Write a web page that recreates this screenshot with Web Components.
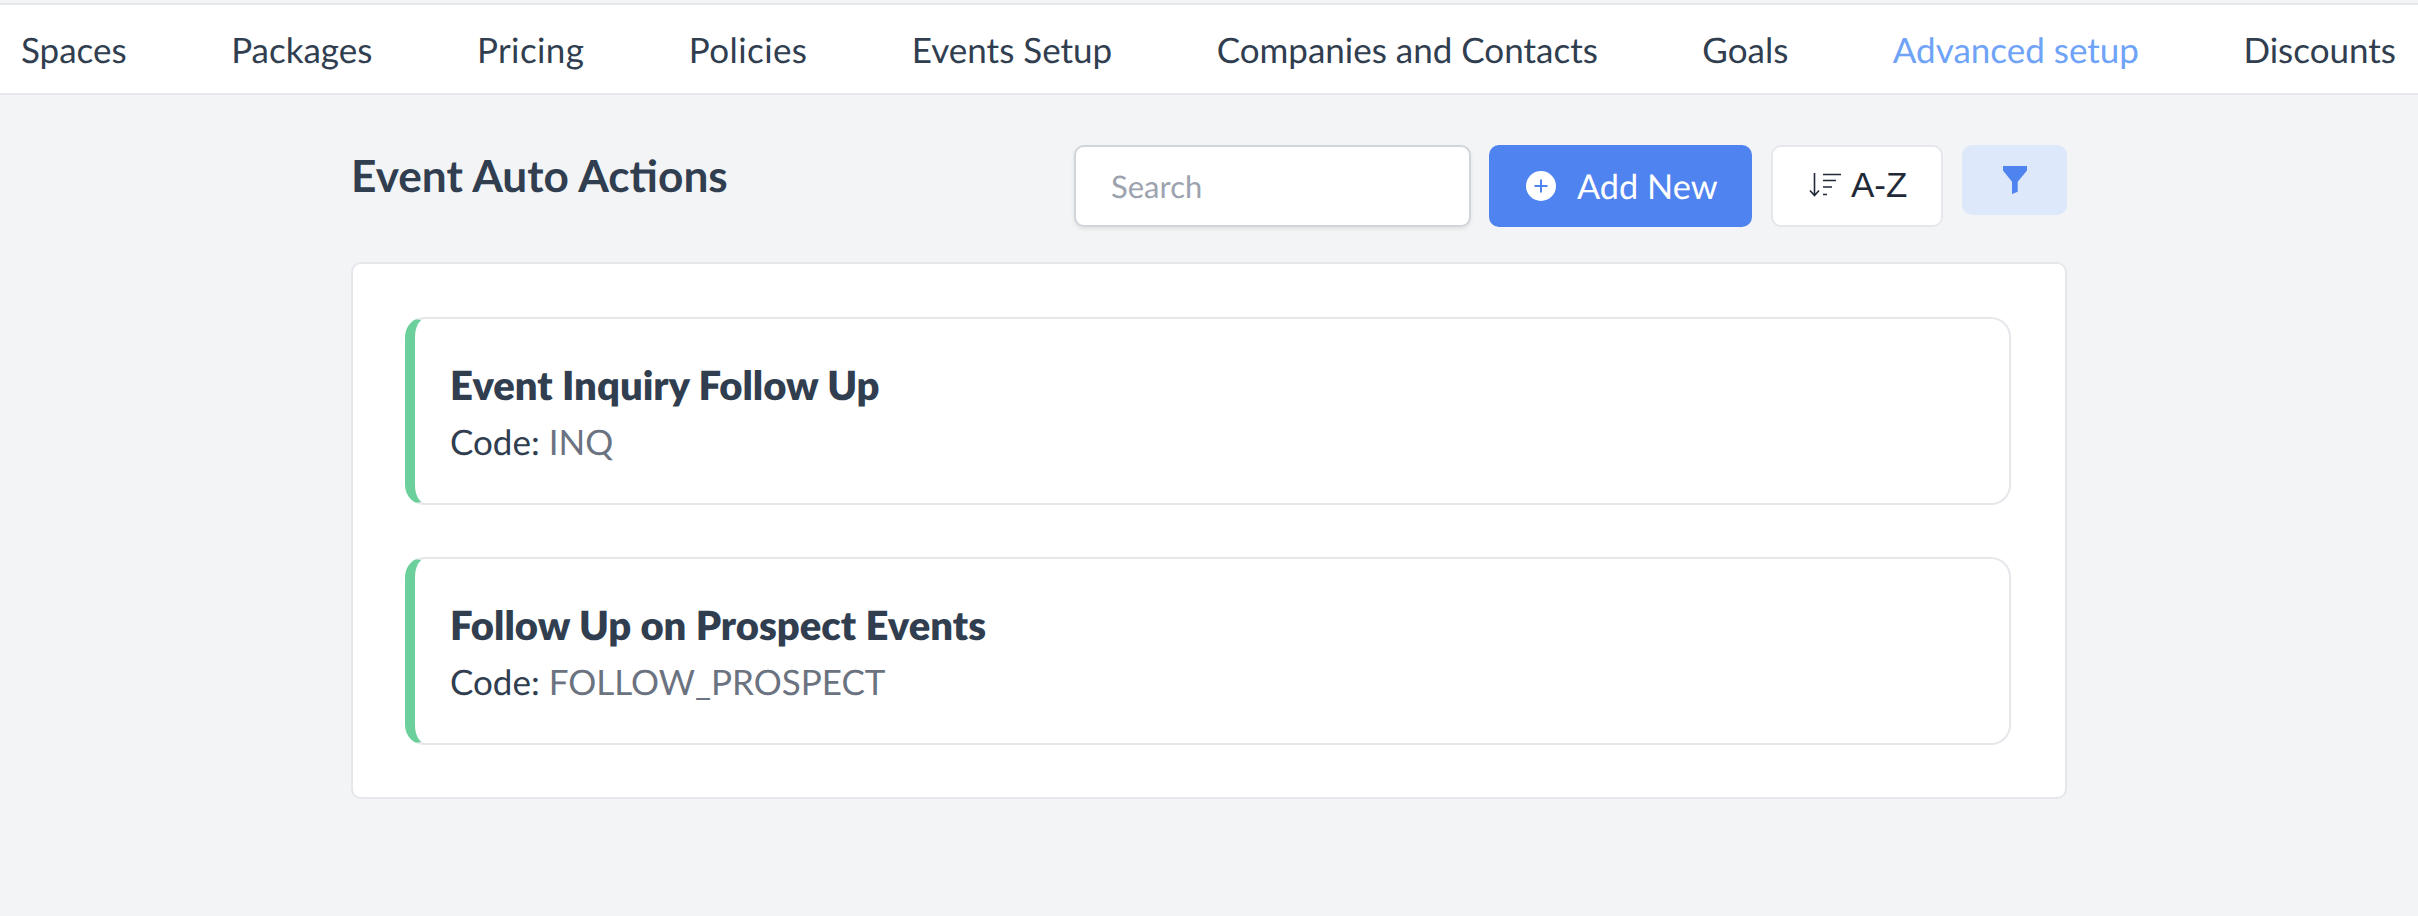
<!DOCTYPE html>
<html>
<head>
<meta charset="utf-8">
<title>Event Auto Actions</title>
<style>
html, body { margin: 0; padding: 0; }
body { background: #f3f4f6; font-family: Lato, "Liberation Sans", sans-serif; color: #303e50; text-rendering: geometricPrecision; }
</style>
</head>
<body>
<top-nav>
    <nav-link>Spaces</nav-link>
    <nav-link>Packages</nav-link>
    <nav-link wide>Pricing</nav-link>
    <nav-link wide>Policies</nav-link>
    <nav-link>Events Setup</nav-link>
    <nav-link>Companies and Contacts</nav-link>
    <nav-link>Goals</nav-link>
    <nav-link active>Advanced setup</nav-link>
    <nav-link>Discounts</nav-link>
</top-nav>
<actions-page heading="Event Auto Actions">
    <action-card name="Event Inquiry Follow Up" code="INQ"></action-card>
    <action-card name="Follow Up on Prospect Events" code="FOLLOW_PROSPECT"></action-card>
</actions-page>

<script>
class TopNav extends HTMLElement{
    constructor(){
        super();
        this.attachShadow({mode: "open"}).innerHTML = `
        <style>
        :host{
            display: flex;
            justify-content: space-between;
            align-items: center;
            height: 86px;
            margin-top: 3px;
            padding: 2px 22px 0 21px;
            background: white;
            border-top: 2px solid #e5e7eb;
            border-bottom: 2px solid #e5e7eb;
        }
        </style>
        <slot></slot>`;
    }
}

class NavLink extends HTMLElement{
    constructor(){
        super();
        this.attachShadow({mode: "open"}).innerHTML = `
        <style>
        :host{
            display: block;
            font-size: 35px;
            line-height: 44px;
            color: #303e50;
            white-space: nowrap;
        }
        :host([wide]){
            letter-spacing: 0.4px;
        }
        :host([active]){
            color: #6ea3f7;
        }
        </style>
        <slot></slot>`;
    }
}

class ActionsPage extends HTMLElement{
    constructor(){
        super();
        this.attachShadow({mode: "open"}).innerHTML = `
        <style>
        :host{
            display: block;
            width: 1716px;
            margin: 50px auto 0;
        }
        .head{
            display: flex;
            justify-content: space-between;
            align-items: flex-start;
            height: 117px;
        }
        h1{
            margin: 0;
            font-size: 44.200px;
            line-height: 62px;
            font-weight: 700;
            color: #303e50;
        }
        .tools{
            display: flex;
            align-items: flex-start;
            gap: 19px;
        }
        .list{
            display: flex;
            flex-direction: column;
            gap: 52px;
            padding: 53px 54px 52px 52px;
            background: white;
            border: 2px solid #e5e7eb;
            border-radius: 10px;
        }
        </style>
        <div class="head">
            <h1></h1>
            <div class="tools">
                <search-box></search-box>
                <add-button></add-button>
                <sort-button></sort-button>
                <filter-button></filter-button>
            </div>
        </div>
        <div class="list"><slot></slot></div>`;
        this.shadowRoot.querySelector("h1").textContent = this.getAttribute("heading");
    }
}

class SearchBox extends HTMLElement{
    constructor(){
        super();
        this.attachShadow({mode: "open"}).innerHTML = `
        <style>
        :host{
            display: flex;
            align-items: center;
            box-sizing: border-box;
            width: 397px;
            height: 82px;
            margin-right: -1px;
            padding-left: 35px;
            background: white;
            border: 2px solid #d1d5db;
            border-radius: 10px;
            box-shadow: 0 2px 4px rgba(0, 0, 0, 0.08);
            font-size: 31px;
            color: #9ca3af;
        }
        </style>
        <span>Search</span>`;
    }
}

class AddButton extends HTMLElement{
    constructor(){
        super();
        this.attachShadow({mode: "open"}).innerHTML = `
        <style>
        :host{
            display: flex;
            align-items: center;
            gap: 20px;
            box-sizing: border-box;
            width: 263px;
            height: 82px;
            padding-left: 36px;
            background: #4f83ef;
            border-radius: 10px;
            font-size: 34.300px;
            color: white;
        }
        svg{
            display: block;
        }
        </style>
        <svg width="32" height="32" viewBox="0 0 32 32">
            <circle cx="16" cy="16" r="15" fill="white"/>
            <path d="M16 9.500v13M9.500 16h13" stroke="#4f83ef" stroke-width="2"/>
        </svg>
        <span>Add New</span>`;
    }
}

class SortButton extends HTMLElement{
    constructor(){
        super();
        this.attachShadow({mode: "open"}).innerHTML = `
        <style>
        :host{
            display: flex;
            align-items: center;
            gap: 10px;
            box-sizing: border-box;
            width: 172px;
            height: 82px;
            padding-left: 36px;
            background: white;
            border: 2px solid #e5e7eb;
            border-radius: 10px;
            font-family: "Liberation Sans", sans-serif;
            font-size: 35px;
            color: #1f2937;
        }
        svg{
            display: block;
            margin-top: -3px;
        }
        </style>
        <svg width="32" height="24" viewBox="0 0 32 24" fill="none" stroke="#1f2937" stroke-width="1.600">
            <path d="M5.500 0v23M1 17.500l4.500 5 4.500-5"/>
            <path d="M14 1.500h18M14 7.500h13M14 14h9M14 21.500h4"/>
        </svg>
        <span>A-Z</span>`;
    }
}

class FilterButton extends HTMLElement{
    constructor(){
        super();
        this.attachShadow({mode: "open"}).innerHTML = `
        <style>
        :host{
            display: flex;
            justify-content: center;
            align-items: flex-start;
            box-sizing: border-box;
            width: 105px;
            height: 70px;
            padding-top: 21px;
            background: #dee8fb;
            border-radius: 10px;
        }
        svg{
            display: block;
        }
        </style>
        <svg width="24" height="28" viewBox="0 0 24 28">
            <path d="M0 0h24v4.500L14.700 15.700V25.700L9 28V15.700L0 4.500z" fill="#4f83ef"/>
        </svg>`;
    }
}

class ActionCard extends HTMLElement{
    constructor(){
        super();
        this.attachShadow({mode: "open"}).innerHTML = `
        <style>
        :host{
            display: block;
            box-sizing: border-box;
            height: 188px;
            padding: 42px 20px 0 35px;
            background: white;
            border: 2px solid #e5e7eb;
            border-left: 10px solid #6bd09b;
            border-radius: 20px;
        }
        .name{
            font-size: 40px;
            line-height: 48px;
            font-weight: 800;
            color: #303e50;
        }
        .code{
            margin-top: 9px;
            font-size: 35px;
            line-height: 48px;
            color: #303e50;
        }
        .code span{
            color: #6b7280;
        }
        </style>
        <div class="name"></div>
        <div class="code">Code: <span></span></div>`;
        this.shadowRoot.querySelector(".name").textContent = this.getAttribute("name");
        this.shadowRoot.querySelector(".code span").textContent = this.getAttribute("code");
    }
}

customElements.define("top-nav", TopNav);
customElements.define("nav-link", NavLink);
customElements.define("actions-page", ActionsPage);
customElements.define("search-box", SearchBox);
customElements.define("add-button", AddButton);
customElements.define("sort-button", SortButton);
customElements.define("filter-button", FilterButton);
customElements.define("action-card", ActionCard);
</script>
</body>
</html>
